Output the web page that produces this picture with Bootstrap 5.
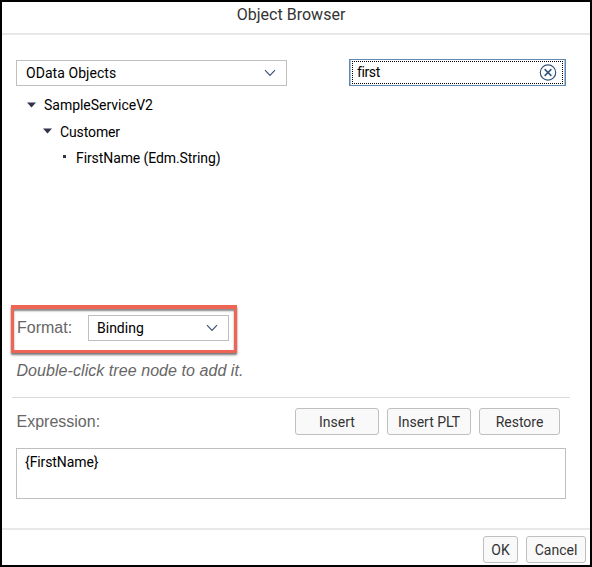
<!DOCTYPE html>
<html lang="en">
<head>
<meta charset="utf-8">
<title>Object Browser</title>
<link href="https://cdn.jsdelivr.net/npm/bootstrap@5.3.0/dist/css/bootstrap.min.css" rel="stylesheet">
<style>
body{font-family:Roboto,"Liberation Sans",sans-serif;font-size:14px;line-height:20px;color:#000;background:#fff}
.dialog{width:592px;height:567px;border:2px solid #000;overflow:hidden}
.dialog-head{height:33px;padding:0 10px 5px 0;border-bottom:2px solid #e8e8e8;font-size:16px;color:#333;letter-spacing:.02px}
.dialog-main{height:493px;padding-top:24px}
.picker{border:1px solid #bfbfbf;border-radius:0;height:26px;padding:0 10px 0 9px;background:#fff;color:#000;font-size:14px;line-height:20px;text-align:left}
.source-pick{width:271px;margin-left:14px;margin-top:1px}
.source-pick span{letter-spacing:.06px}
.format-pick{width:141px}
.format-pick span{margin-left:-1px}
.search{width:217px;height:27px;margin-right:24px;border:1px solid #6186b0;box-shadow:inset 1px 0 #a9c3da,inset -1px 0 #a9c3da;padding:1px 2px}
.search-in{border:1px dotted #000;padding:0 5px 0 4px}
.search-in span{letter-spacing:-.4px;margin-bottom:1px}
.tree{height:219px;padding-top:6px}
.tree li{height:26.4px;display:flex;align-items:center}
.tree svg{flex:none;margin-right:8px}
.lvl1{padding-left:25px;letter-spacing:-.02px}
.lvl2{padding-left:41px;letter-spacing:-.12px}
.lvl3{padding-left:58px;letter-spacing:-.09px}
.callout{width:226px;height:48px;margin-left:9px;padding:0 5px 3px 3px;border:3px solid #ee6555;border-top-width:4px;box-shadow:0 2px 2px #777,inset 0 2px 2px #888}
.caption{font-family:"Liberation Sans",Arial,sans-serif;font-size:16px;color:#666}
.hint{height:44px;padding:8px 0 0 14.5px;margin:0 20px 0 0;letter-spacing:.06px}
.rule{margin:0 20px 0 10px;border-top:1px solid #d9d9d9}
.expr-row{padding:10px 30px 0 14.5px;height:50px}
.key{height:27px;padding:0;border:1px solid #bfbfbf;border-radius:3px;background:#f9f9f9;color:#333;font-size:14px;line-height:24px}
.w-insert{width:84px}.w-restore{width:81px}.w-ok{width:35px}.w-cancel{width:60px}
.expr-box{display:block;width:550px;height:51px;margin-left:14px;border:1px solid #bfbfbf;border-radius:0;padding:3px 8px;font-size:14px;line-height:20px;color:#000;letter-spacing:-.1px;resize:none;outline:0}
.dialog-foot{height:37px;border-top:2px solid #e8e8e8;padding:6px 4px 0 0}
</style>
</head>
<body>
<div class="dialog d-flex flex-column">
  <header class="dialog-head d-flex align-items-center justify-content-center flex-shrink-0">Object Browser</header>
  <main class="dialog-main flex-shrink-0">
    <div class="d-flex justify-content-between align-items-start">
      <button class="picker source-pick d-flex align-items-center justify-content-between" type="button">
        <span>OData Objects</span>
        <svg width="12" height="8" viewBox="0 0 12 8" fill="none" stroke="#3b5575" stroke-width="1.2"><path d="M1 1.2 6 6.3l5-5.1"/></svg>
      </button>
      <div class="search">
        <div class="search-in d-flex align-items-center justify-content-between h-100">
          <span>first</span>
          <svg width="18" height="18" viewBox="0 0 18 18" fill="none" stroke="#345478" stroke-width="1.2"><circle cx="9" cy="8.5" r="7.7"/><path d="m5.6 5.1 6.8 6.8m0-6.8-6.8 6.8" stroke-width="1.5"/></svg>
        </div>
      </div>
    </div>
    <ul class="tree list-unstyled mb-0">
      <li class="lvl1"><svg width="9" height="7" viewBox="0 0 9 7"><path d="M0 .5h9L4.5 5.5z" fill="#32324a"/></svg>SampleServiceV2</li>
      <li class="lvl2"><svg width="9" height="7" viewBox="0 0 9 7"><path d="M0 .5h9L4.5 5.5z" fill="#32324a"/></svg>Customer</li>
      <li class="lvl3"><svg width="8" height="7" viewBox="0 0 8 7"><path d="M3 1h3v3H3z" fill="#32324a"/></svg>FirstName (Edm.String)</li>
    </ul>
    <div class="callout d-flex align-items-center justify-content-between">
      <span class="caption">Format:</span>
      <button class="picker format-pick d-flex align-items-center justify-content-between" type="button">
        <span>Binding</span>
        <svg width="12" height="8" viewBox="0 0 12 8" fill="none" stroke="#3b5575" stroke-width="1.2"><path d="M1 1.2 6 6.3l5-5.1"/></svg>
      </button>
    </div>
    <p class="caption hint fst-italic">Double-click tree node to add it.</p>
    <div class="rule"></div>
    <div class="expr-row d-flex align-items-start gap-2">
      <span class="caption me-auto pt-1">Expression:</span>
      <button class="btn key w-insert" type="button">Insert</button>
      <button class="btn key w-insert" type="button">Insert PLT</button>
      <button class="btn key w-restore" type="button">Restore</button>
    </div>
    <textarea class="expr-box" aria-label="Expression">{FirstName}</textarea>
  </main>
  <footer class="dialog-foot d-flex align-items-start justify-content-end gap-2">
    <button class="btn key w-ok" type="button">OK</button>
    <button class="btn key w-cancel" type="button">Cancel</button>
  </footer>
</div>
<script src="https://cdn.jsdelivr.net/npm/bootstrap@5.3.0/dist/js/bootstrap.bundle.min.js"></script>
</body>
</html>
